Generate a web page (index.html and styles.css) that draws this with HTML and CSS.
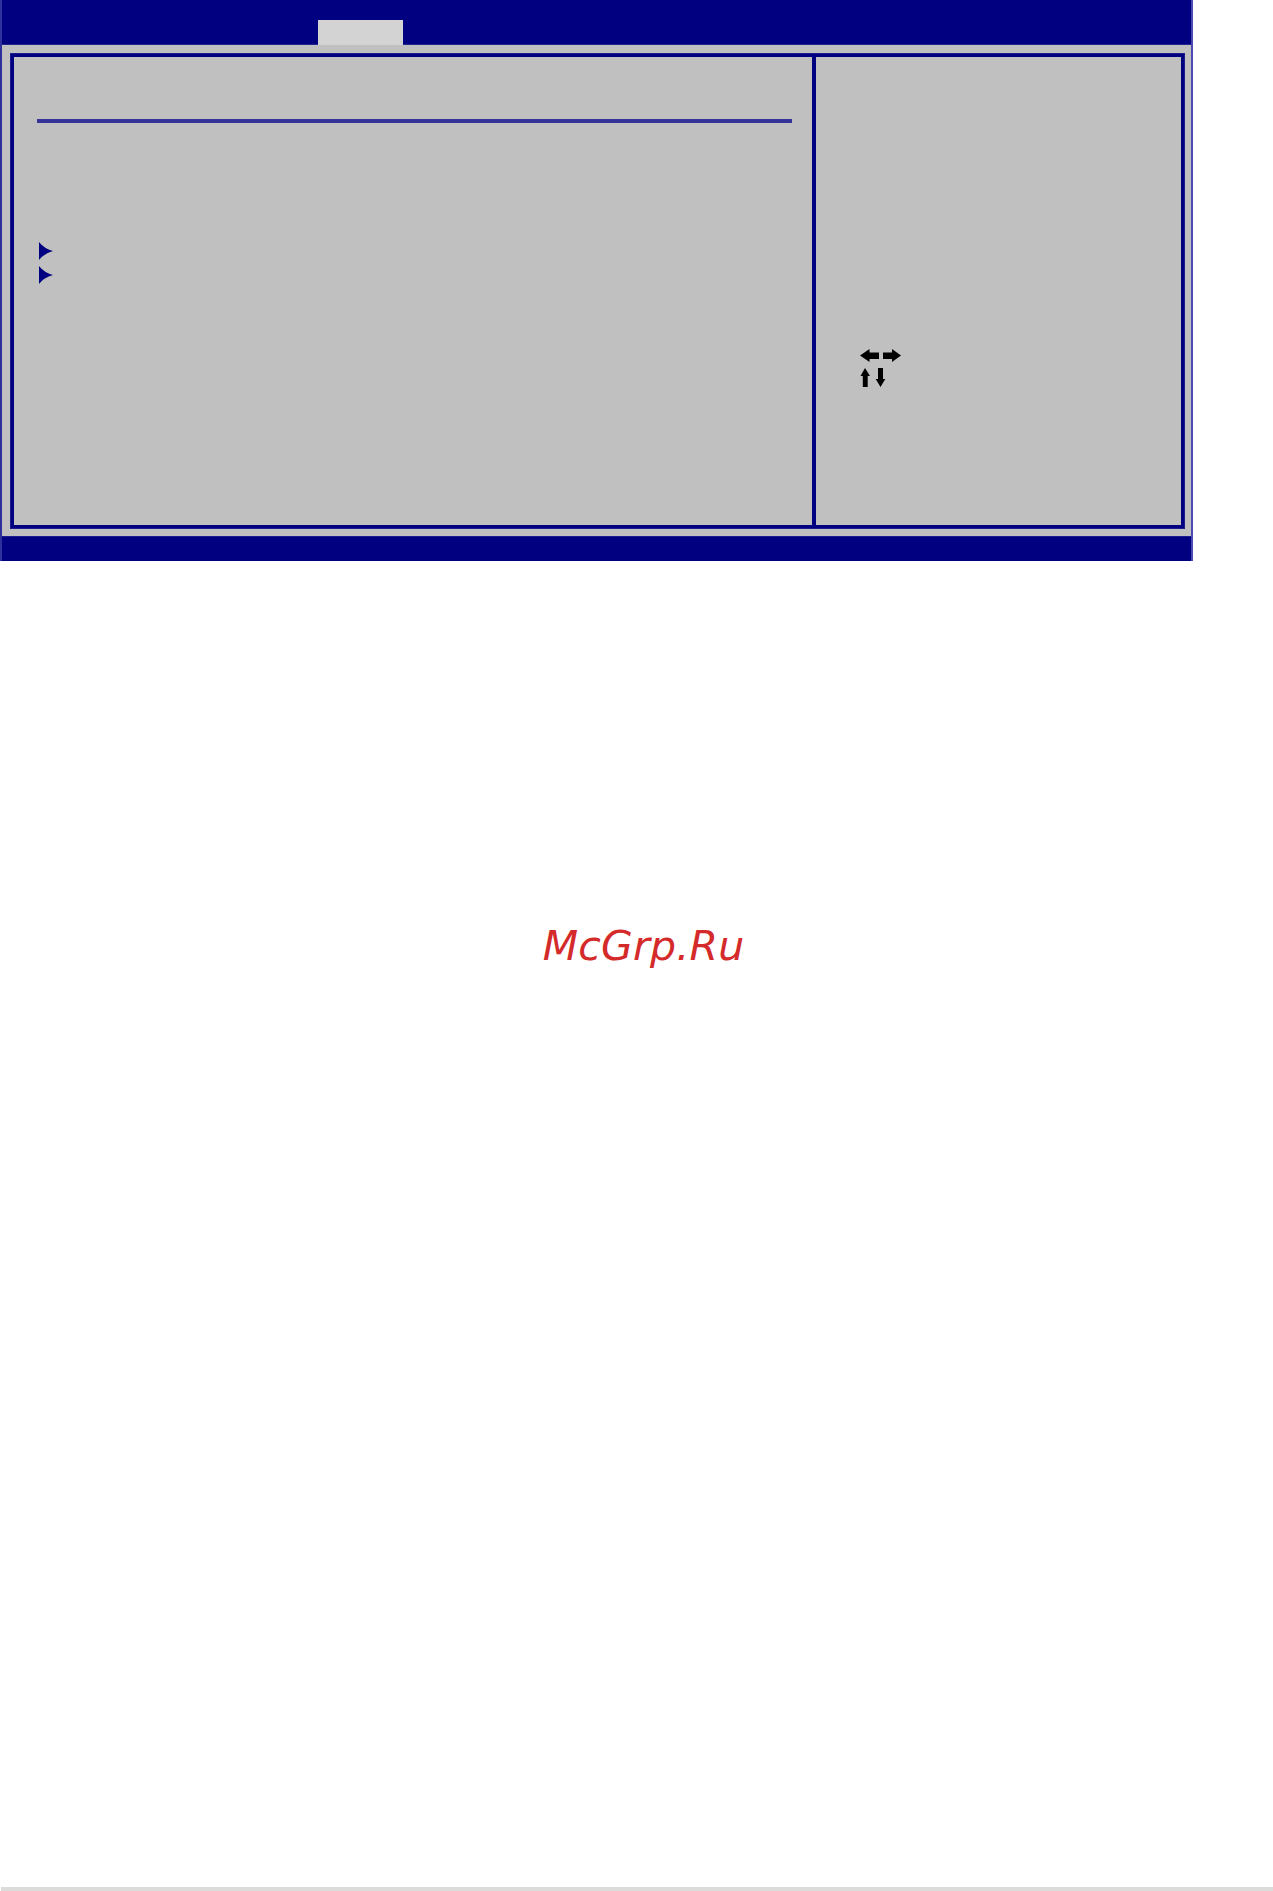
FILE: index.html
```html
<!DOCTYPE html>
<html lang="en">
<head>
<meta charset="utf-8">
<title>BIOS Setup</title>
<link rel="stylesheet" href="styles.css">
</head>
<body>
  <div class="page">
    <section class="bios">
      <header class="bios-top">
        <div class="tab"></div>
      </header>
      <div class="bios-body">
        <div class="frame">
          <div class="main-col">
            <div class="rule"></div>
            <ul class="submenus">
              <li class="submenu">
                <svg class="bullet" width="14" height="18" viewBox="0 0 14 18"><path d="M0 0 Q5 6.5 14 9 Q5 11.5 0 18 Z" fill="#000080"/></svg>
              </li>
              <li class="submenu">
                <svg class="bullet" width="14" height="18" viewBox="0 0 14 18"><path d="M0 0 Q5 6.5 14 9 Q5 11.5 0 18 Z" fill="#000080"/></svg>
              </li>
            </ul>
          </div>
          <div class="help-col">
            <svg class="keys" width="42" height="38" viewBox="0 0 42 38">
              <!-- left / right -->
              <path d="M0 6.5 L9.5 0 L9.5 3.5 L19 3.5 L19 10 L9.5 10 L9.5 13 Z" fill="#000"/>
              <path d="M41 6.5 L32 0 L32 3.5 L23 3.5 L23 10 L32 10 L32 13 Z" fill="#000"/>
              <!-- up / down -->
              <path d="M5 19 L10 27 L7.7 27 L7.7 38 L2.8 38 L2.8 27 L0.5 27 Z" fill="#000"/>
              <path d="M20.5 38 L25.3 30 L23 30 L23 19 L18 19 L18 30 L15.7 30 Z" fill="#000"/>
            </svg>
          </div>
        </div>
      </div>
      <footer class="bios-bottom"></footer>
    </section>

    <p class="mark">McGrp.Ru</p>

    <div class="page-edge"></div>
  </div>
</body>
</html>
```

FILE: styles.css
```css
html, body {
  margin: 0;
  padding: 0;
  background: #ffffff;
}

.page {
  display: flex;
  flex-direction: column;
  min-height: 1891px;
  font-family: "DejaVu Sans", sans-serif;
}

/* ---- setup screen ---- */
.bios {
  width: 1189px;
  border-left: 2px solid #30309c;
  border-right: 2px solid #4a4ab0;
  background: #c0c0c0;
}

.bios-top {
  height: 45px;
  background: #000080;
  border-bottom: 1px solid #24248e;
  display: flex;
  align-items: flex-end;
  padding-left: 316px;
  box-sizing: border-box;
}

.tab {
  width: 85px;
  height: 25px;
  margin-bottom: -1px;
  background: #d3d3d3;
}

.bios-body {
  padding: 8px 6px 7px 8px;
}

.frame {
  height: 468px;
  border: 3px solid #000080;
  outline: 1px solid #1c1c8c;
  margin: 1px;
  display: flex;
}

.main-col {
  width: 802px;
  padding: 62px 20px 0 23px;
  border-right: 4px solid #000080;
  box-sizing: border-box;
}

.rule {
  height: 4px;
  background: #333399;
}

.submenus {
  list-style: none;
  margin: 119px 0 0 2px;
  padding: 0;
  display: flex;
  flex-direction: column;
  gap: 6px;
}

.submenu {
  height: 18px;
}

.bullet {
  display: block;
}

.help-col {
  flex: 1;
  padding: 292px 0 0 44px;
}

.keys {
  display: block;
}

.bios-bottom {
  height: 24px;
  background: #000080;
  border-top: 1px solid #1c1c8c;
}

/* ---- watermark ---- */
.mark {
  margin: 361px 0 0 0;
  padding-left: 14px;
  text-align: center;
  font-family: "DejaVu Sans", sans-serif;
  font-style: oblique;
  font-size: 41px;
  line-height: 48px;
  color: #d42a2a;
  letter-spacing: 0.2px;
}

.page-edge {
  margin-top: auto;
  margin-left: 1px;
  height: 4px;
  background: #dcdcda;
}
```
